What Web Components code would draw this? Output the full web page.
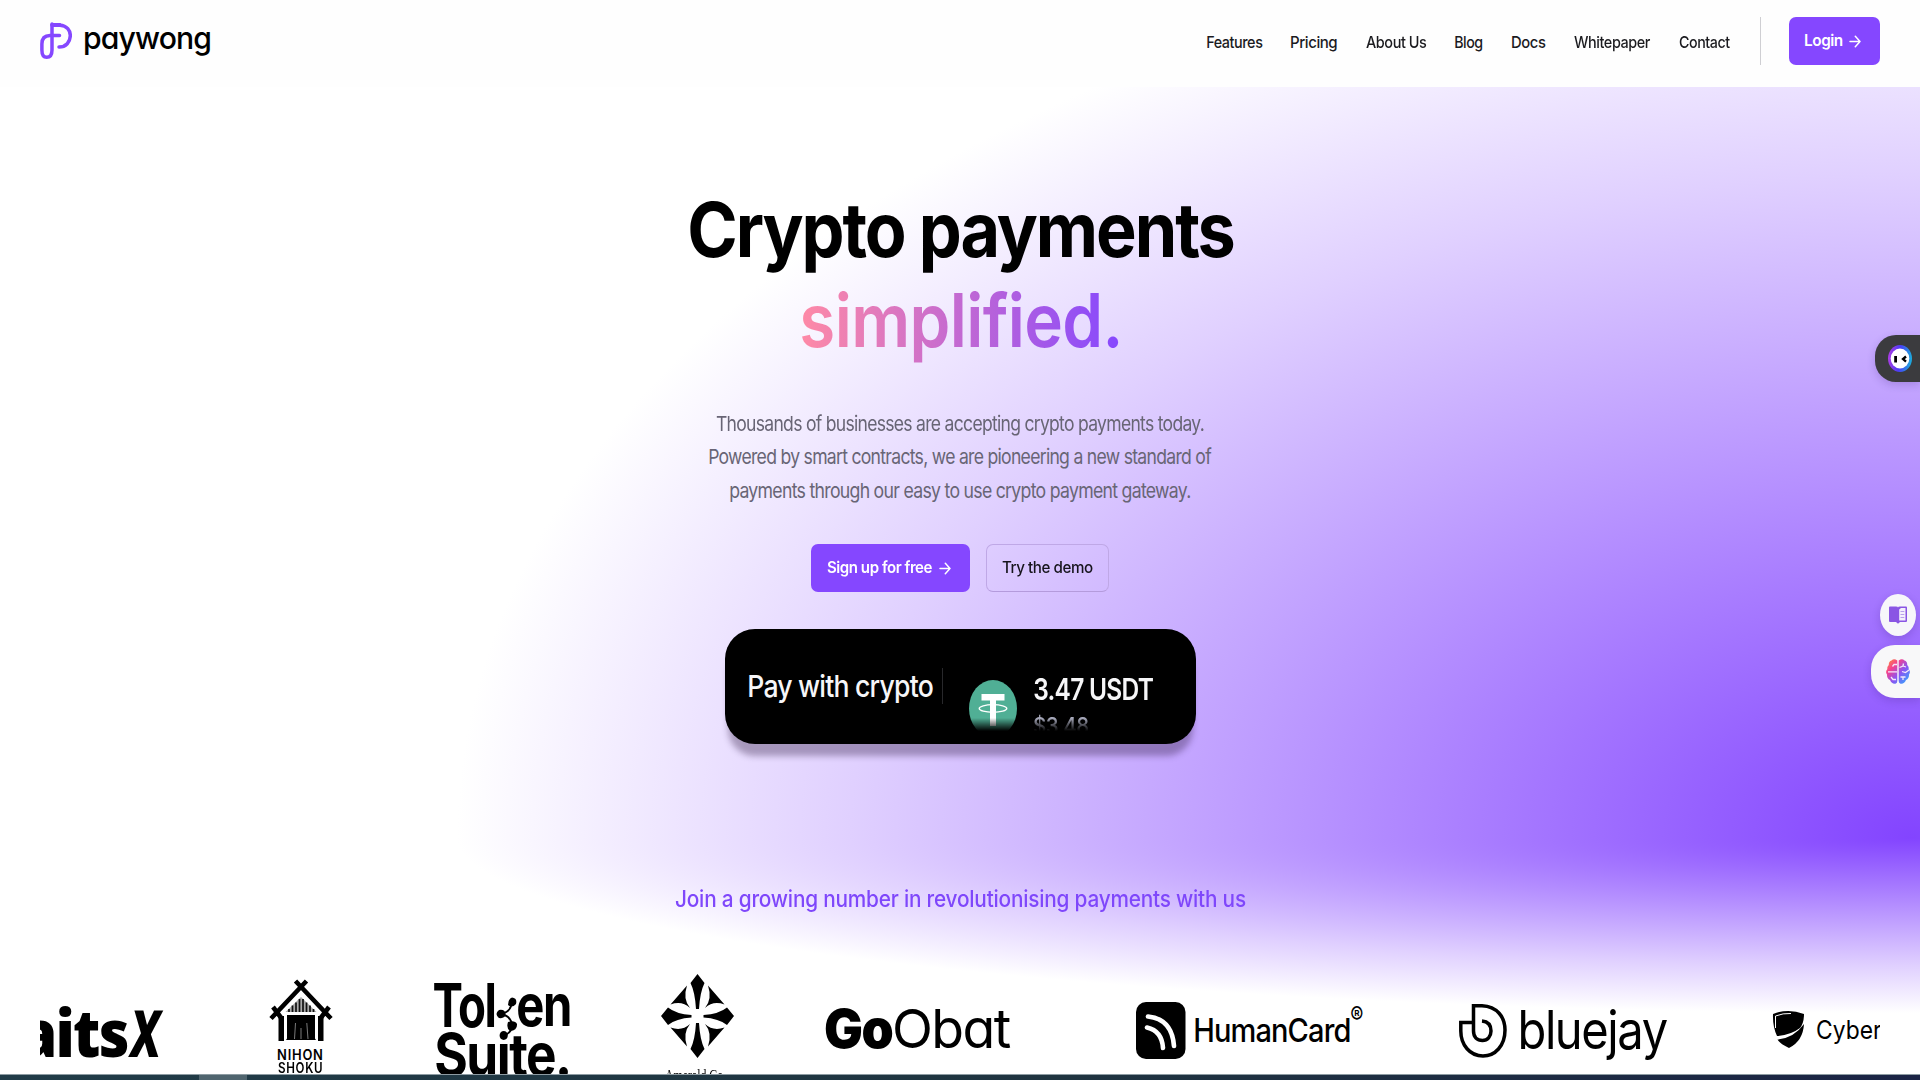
<!DOCTYPE html>
<html lang="en">
<head>
<meta charset="utf-8">
<title>Paywong</title>
<style>
html,body{margin:0;padding:0;background:#fff;overflow:hidden}
body{font-family:Inter,"Liberation Sans",sans-serif;color:#000}
</style>
</head>
<body>
<pw-page></pw-page>
<script>
const define = (name, html, ready) => {
  const t = document.createElement('template');
  t.innerHTML = html;
  customElements.define(name, class extends HTMLElement {
    constructor() {
      super();
      this.attachShadow({mode: 'open'}).append(t.content.cloneNode(true));
    }
    connectedCallback() { if (ready) ready(this, this.shadowRoot); }
  });
};

/* One line of text whose ink is condensed to the width "w"; "ls" is its tracking in em. */
const ctx = document.createElement('canvas').getContext('2d');
define('fit-text', `<style>
:host{display:block;flex:none;white-space:nowrap}
span{display:inline-block;transform-origin:0 0;white-space:pre}
:host([gradient]) span{background:linear-gradient(90deg,#ff8aa6,#8547ff);-webkit-background-clip:text;background-clip:text;color:transparent}
</style><span><slot></slot></span>`, (el, root) => {
  const w = +el.getAttribute('w'), h = el.getAttribute('h'), s = +el.getAttribute('s');
  const ls = +(el.getAttribute('ls') ?? -.03) * s;
  el.style.width = w + 'px';
  el.style.height = el.style.lineHeight = h + 'px';
  el.style.fontSize = s + 'px';
  el.style.letterSpacing = ls + 'px';
  if (el.hasAttribute('wt')) el.style.fontWeight = el.getAttribute('wt');
  const span = root.querySelector('span'), cs = getComputedStyle(el);
  ctx.font = `${cs.fontStyle} ${cs.fontWeight} ${cs.fontSize} ${cs.fontFamily}`;
  const m = ctx.measureText(el.textContent);
  const left = m.actualBoundingBoxLeft;
  const right = m.width - m.actualBoundingBoxRight;
  const ink = span.getBoundingClientRect().width - ls + left - right;
  const k = w / ink;
  span.style.transform = `translateX(${left * k}px) scaleX(${k})`;
});

define('pw-arrow', `<style>:host{display:block;flex:none;width:12px;height:13px}svg{display:block}</style>
<svg width="12" height="13" viewBox="0 0 12 13" fill="none" stroke="#fff" stroke-width="1.5" stroke-linecap="round" stroke-linejoin="round"><path d="M1 6.5H11M6.3 1.3L11 6.5L6.3 11.7"/></svg>`);

define('pw-button', `<style>
:host{display:flex;flex:none;box-sizing:border-box;height:47.5px;border-radius:7px;background:#8547ff;color:#fff;padding:11px 0 0 16px;font-weight:600}
:host([outline]){background:transparent;border:1px solid #bfa8e6;border-bottom-color:#b49bdc;color:#16141c;padding:10px 0 0 15px;font-weight:550}
</style><slot></slot>`);

define('pw-logo', `<style>
:host{display:flex;flex:none;padding:22px 0 0 40px}
svg{display:block;margin-right:12.500px}
fit-text{font-feature-settings:"cv11" 1}
</style>
<svg width="32" height="38" viewBox="0 0 32 38" fill="none" stroke="#8547ff" stroke-width="3.5" stroke-linecap="round" stroke-linejoin="round">
<path d="M12 3.2H20C27 3.6 30.3 8.5 30.3 13.5C30.3 20 26 25 19 25"/><path d="M12 2V28C12 33 10 35.3 6.7 35.3C3.4 35.3 1.9 33 1.9 28V22C1.9 16 5 13.5 10 13.5H19.5"/><path stroke-width="2.6" d="M12 2.2H20"/>
</svg><fit-text w="125.5" h="40" s="31.500" wt="500" style="margin-top:-4.500px">paywong</fit-text>`);

define('pw-header', `<style>
:host{display:flex;height:87px;background:#fefefe;box-sizing:border-box;justify-content:space-between}
nav{display:flex;color:#1b1b1f;padding-right:40px}
.i{margin:27px 28.5px 0 0}
.d{width:1px;height:48px;background:#cfcfd3;margin:17px 28.5px 0 .5px}
pw-button{margin-top:17px;width:91px;padding-left:15.500px}
pw-arrow{margin:6.5px 0 0 7px}
</style><pw-logo></pw-logo>
<nav>
<fit-text class="i" w="56" h="30" s="16.5" wt="550" style="margin-right:28px">Features</fit-text>
<fit-text class="i" w="46.500" h="30" s="16.5" wt="550" style="margin-right:28px">Pricing</fit-text>
<fit-text class="i" w="61" h="30" s="16.5" wt="550" style="margin-right:28.5px">About Us</fit-text>
<fit-text class="i" w="28" h="30" s="16.5" wt="550" style="margin-right:28.5px">Blog</fit-text>
<fit-text class="i" w="34" h="30" s="16.5" wt="550" style="margin-right:28.500px">Docs</fit-text>
<fit-text class="i" w="77" h="30" s="16.5" wt="550" style="margin-right:28px">Whitepaper</fit-text>
<fit-text class="i" w="51.5" h="30" s="16.5" wt="550">Contact</fit-text>
<div class="d"></div>
<pw-button><fit-text w="37.5" h="24" s="16" wt="600">Login</fit-text><pw-arrow></pw-arrow></pw-button>
</nav>`);

define('pw-pay', `<style>
:host{display:flex;box-sizing:border-box;width:471px;height:114.5px;border-radius:30px;background:#000;color:#f6f6f8;padding-left:24px;box-shadow:0 15px 6px -3px rgba(40,20,60,.34)}
.d{width:1.5px;height:36px;background:#28282b;margin:39px 26px 0 9.5px}
.w{display:flex;height:102.5px;overflow:hidden;-webkit-mask:linear-gradient(#000 89px,transparent 102px);mask:linear-gradient(#000 89px,transparent 102px)}
svg{display:block;margin:50.5px 17px 0 0;flex:none}
</style>
<fit-text w="183.5" h="40" s="30.5" wt="550" style="margin-top:37px">Pay with crypto</fit-text>
<div class="d"></div>
<div class="w"><svg width="48" height="57" viewBox="0 0 48 57"><ellipse cx="24" cy="28.5" rx="24" ry="28.5" fill="#50af95"/><path fill="#fff" d="M12.5 14H35.500V20.500H27V46H21V20.500H12.500Z"/><ellipse cx="24" cy="28.500" rx="13.800" ry="3.800" fill="none" stroke="#fff" stroke-width="1.300"/></svg>
<div><fit-text w="119.500" h="36" s="29.5" wt="600" style="margin-top:42px">3.47 USDT</fit-text><fit-text w="54.500" h="30" s="23.500" wt="550" style="margin-top:3.500px;color:#a9abbd">$3.48</fit-text></div></div>`);

define('brand-strip', `<style>
:host{display:flex;height:160px;margin:0 40px;overflow:hidden;align-items:flex-start}
.b{display:flex;flex:none}.c{flex-direction:column}
svg{display:block;flex:none;overflow:visible}
</style>
<div class="b" style="width:230px;height:160px;font-family:'Open Sans',sans-serif">
  <fit-text w="106" h="70" s="65" wt="800" style="margin:83.500px 0 0 -18px">aits</fit-text><fit-text w="36" h="70" s="65" wt="800" ls="0" style="margin:83.500px 0 0 2.500px;transform:skewX(-7deg)">X</fit-text></div>
<div class="b c" style="width:164px;margin-top:66px">
  <svg width="62" height="61" viewBox="0 0 62 61"><g stroke="#000" stroke-width="4.600" fill="none"><path d="M36.500 1L1 38.500M25.500 1L61 38.500M3 27L12 39M59 27L50 39"/></g><path d="M31 14L12 32.500H50Z" fill="#fff"/><path d="M8.500 36H14V61H8.500ZM48 36H53.500V61H48ZM17 35H45V58.500L46 60H16L17 58.500Z"/><path d="M31 17L15.500 32H46.500Z" fill="#aaa"/><path d="M19 32V29M22.500 32V25.500M26 32V22.500M29.500 32V19M33 32V19M36.500 32V22.500M40 32V25.500M43.500 32V29" stroke="#111" stroke-width="1.700"/><path d="M25.500 43L24.500 59M31 48V59M36.800 43L38 59" stroke="#999" stroke-width=".8"/></svg>
  <fit-text w="44.500" h="14" s="13.800" wt="600" ls=".06" style="margin:7px 0 0 8px">NIHON</fit-text><fit-text w="44.500" h="14" s="13.800" wt="600" ls=".06" style="margin:-.500px 0 0 8px">SHOKU</fit-text></div>
<div class="b c" style="width:226.500px;margin-top:61px">
  <div class="b"><fit-text w="60.500" h="60" s="60" wt="700">Tol</fit-text>
  <svg width="23" height="48" viewBox="0 0 23 48"><path d="M17 27Q16 37 6 39M6 39Q17 41 17 52M17 52Q16 58 7 62" fill="none" stroke="#000" stroke-width="1.800"/><path d="M17 22.500Q22.500 23 21 29Q17 33.500 13 30Q13 24 17 22.500ZM4 35Q10 34 10.500 39Q10 44 4 43Q-1 39 4 35ZM13 47Q20 45 22 49Q22.500 56 15 56Q11 53 13 47Z"/></svg>
  <fit-text w="52" h="60" s="58" wt="700" style="margin-left:.5px">en</fit-text></div>
  <fit-text w="132" h="60" s="59" wt="700" style="margin:-9.500px 0 0 2px">Suite.</fit-text></div>
<div class="b c" style="width:164.500px;margin-top:60px">
  <svg width="73" height="84" viewBox="0 0 73 84"><defs><g id="q"><path d="M36.500 0L43.500 9Q39 18 38 35H35Q34 18 29.500 9Z"/><path d="M26 11.500L9.500 30.500Q21 26.500 29 34Q21.500 25 26 11.500ZM47 11.500L63.500 30.500Q52 26.500 44 34Q51.500 25 47 11.500Z"/></g></defs><use href="#q"/><use href="#q" transform="matrix(1 0 0 -1 0 84)"/><path d="M0 42L7 33.500Q15 40 30.500 41V43.500Q15 44.500 7 51ZM73 42L66 33.500Q58 40 42.500 41V43.500Q58 44.500 66 51Z"/></svg>
  <fit-text w="61" h="20" s="16.5" wt="400" ls="0" style="margin:8px 0 0 4px;font-family:'Liberation Serif',serif">Amerald Co.</fit-text></div>
<div class="b" style="width:310.500px;margin-top:82px">
  <fit-text w="68" h="66" s="54" wt="900">Go</fit-text><fit-text w="115.500" h="66" s="54" wt="400" style="margin-left:2px;font-feature-settings:'cv11' 1">Obat</fit-text></div>
<div class="b" style="width:323px;margin-top:88px">
  <svg width="49.500" height="57" viewBox="0 0 49.500 57"><rect width="49.500" height="57" rx="10"/><path d="M12 14.500Q36 17 38 44M11 25.500Q26 29 27 46" fill="none" stroke="#fff" stroke-width="4.600" stroke-linecap="round"/></svg>
  <fit-text w="154.500" h="40" s="32.500" wt="500" style="margin:9px 1.500px 0 10px">HumanCard</fit-text><fit-text w="11.500" h="24" s="24" wt="500" ls="0" style="margin-top:2.500px">®</fit-text></div>
<div class="b" style="width:314.500px;margin-top:90px">
  <svg width="48" height="54" viewBox="0 0 48 54" fill="none" stroke="#000" stroke-width="3.500"><path d="M14.500 19V1.800H23C38 2.500 46 13 46 26C46 42 36 52 24 52C11 52 1.800 41 1.800 27V18.500H14.500V27C14.500 33 18 36.500 23.500 36.500C28.500 36.500 32 32.500 32 27C32 21 28.500 17.500 23 17"/></svg>
  <fit-text w="146.500" h="66" s="53" wt="430" style="margin:-7px 0 0 14px">bluejay</fit-text></div>
<div class="b" style="margin-top:97px">
  <svg width="31" height="37" viewBox="0 0 31 37"><path d="M0 3Q15 -3 31 3Q31 12 27 17Q18 24 4 25Q-.5 15 0 3ZM31 13Q30 30 16 37Q7 33 4.500 28.500Q21 27 31 13Z"/><path d="M2.500 17V5Q10 2 18 2.500" stroke="#fff" fill="none"/></svg>
  <fit-text w="65" h="30" s="25.500" wt="400" ls="0" style="margin:4px 0 0 13px">Cyber</fit-text></div>`);

define('pw-hero', `<style>
:host{display:flex;flex-direction:column;height:987px;box-sizing:border-box;padding-top:97px;
--s:#8344ff 0,#e0d0ff 73%,#fff 100%;
background:radial-gradient(1455px 908px at 1912px 751px,var(--s)) 0 0/1920px 751px no-repeat,
radial-gradient(1455px 175px at 1912px 0,var(--s)) 0 751px/1920px 236px no-repeat,#fff}
.m{display:flex;flex-direction:column;align-items:center}
h1{margin:0;display:flex;flex-direction:column;align-items:center}
p{margin:41.500px 0 0;display:flex;flex-direction:column;align-items:center;color:#686575}
.a{display:flex;gap:16px;margin:36.500px 0 37.500px}
</style>
<div class="m">
<h1><fit-text w="543.500" h="90" s="76" wt="650" style="margin-left:3px">Crypto payments</fit-text><fit-text gradient w="316.500" h="90" s="74" wt="620" ls="-.01" style="margin:1px 0 0 .500px">simplified.</fit-text></h1>
<p><fit-text w="488" h="33.700" s="20.500" ls="-.04">Thousands of businesses are accepting crypto payments today.</fit-text><fit-text w="503" h="33.700" s="20.500" ls="-.04">Powered by smart contracts, we are pioneering a new standard of</fit-text><fit-text w="460.500" h="33.700" s="20.500" ls="-.04">payments through our easy to use crypto payment gateway.</fit-text></p>
<div class="a"><pw-button style="width:159px"><fit-text w="105" h="24" s="16">Sign up for free</fit-text><pw-arrow style="margin:7px 0 0 7px"></pw-arrow></pw-button><pw-button outline style="width:123px"><fit-text w="90.500" h="24" s="16">Try the demo</fit-text></pw-button></div>
<pw-pay></pw-pay>
<fit-text w="571" h="30" s="22.500" wt="550" ls="-.01" style="margin-top:140px;color:#7f47fb">Join a growing number in revolutionising payments with us</fit-text>
</div>
<brand-strip></brand-strip>`);

/* Floating extension tabs over the right edge of the page. */
define('edge-tabs', `<style>
:host{position:absolute;right:0;top:335px;display:flex;flex-direction:column;align-items:flex-end}
div{display:flex;box-sizing:border-box;align-items:center;box-shadow:0 3px 9px rgba(50,20,110,.2)}
.k{width:45px;height:46.500px;border-radius:21px 0 0 21px;background:#3b3b3e;padding-left:13px;margin-bottom:212.500px}
.o{width:36px;height:42px;border-radius:50%;background:#f7f6fa;margin:0 4px 9px 0;justify-content:center}
.n{width:49px;height:53px;border-radius:24px 0 0 24px;background:#f8f8f9;padding-left:15px}
svg{display:block}
</style>
<div class="k"><svg width="24" height="27" viewBox="0 0 24 27"><defs><linearGradient id="r" x1="0" y1=".7" x2="1" y2=".8"><stop offset="0" stop-color="#a83ce6"/><stop offset=".45" stop-color="#4a3cf5"/><stop offset="1" stop-color="#18b4dc"/></linearGradient></defs><ellipse cx="12" cy="13.500" rx="12" ry="13.500" fill="url(#r)"/><ellipse cx="12" cy="13.500" rx="9.300" ry="10" fill="#fff"/><path d="M6.200 11H9V17.500H6.200Z"/><path d="M18 11.500L15 14L18 16.700" fill="none" stroke="#000" stroke-width="2.300"/></svg></div>
<div class="o"><svg width="18" height="18" viewBox="0 0 18 18"><path fill="#8a55e4" d="M0 1.500Q0 .5 1 .5H7Q9 .5 9 1.500Q9 .5 11 .5H17Q18 .5 18 1.500V15Q18 16 17 16H11L9 17.800L7 16H1Q0 16 0 15Z"/><path fill="#f4f0fc" d="M10.200 3.500L12 2H16.500V14.500H10.200Z"/><path d="M11.500 5.500H15.300M11.500 8.500H15.300M11.500 11.500H15.300" stroke="#b9a0ec"/></svg></div>
<div class="n"><svg width="24" height="25" viewBox="0 0 24 25"><defs><linearGradient id="g" x1="0" y1="0" x2="1" y2="1"><stop offset="0" stop-color="#ff9a2e"/><stop offset=".3" stop-color="#f4418f"/><stop offset=".58" stop-color="#8c55f2"/><stop offset="1" stop-color="#22b4ff"/></linearGradient></defs><path fill="url(#g)" d="M11.300 1.500Q8 -1 5.500 1.500Q2.500 2.500 2.800 6Q.8 8 1.400 10Q-1 12.500 1 15.500Q.8 19.500 4 21Q6 25.500 9.500 24.700Q11.300 24 11.300 22ZM12.700 1.500Q16 -1 18.500 1.500Q21.500 2.500 21.200 6Q23.200 8 22.600 10Q25 12.500 23 15.500Q23.200 19.500 20 21Q18 25.500 14.500 24.700Q12.700 24 12.700 22Z"/><path d="M11 5.500H8L6.500 7.500M2 12.800H11M5 18L7 20.500H10M13.500 8.500L17 7L17.500 4.500M17 7L20 8M23 11L19.500 13.500L16 12.500M14.500 18H19.500M17 18V21" fill="none" stroke="#f3e8fb" stroke-width="1.300"/></svg></div>`);

define('task-edge', `<style>
:host{display:flex;height:6px;background:linear-gradient(90deg,#213c48,#1f3440 55%,#1b2445);box-sizing:border-box;border-top:1px solid #8d9ba2;padding-left:199px}
div{width:48px;background:#50656f}
</style><div></div>`);

define('pw-page', `<style>:host{display:block;position:relative;width:1920px;height:1080px;overflow:hidden;background:#fff}</style>
<pw-header></pw-header><pw-hero></pw-hero><task-edge></task-edge><edge-tabs></edge-tabs>`);
</script>
</body>
</html>
